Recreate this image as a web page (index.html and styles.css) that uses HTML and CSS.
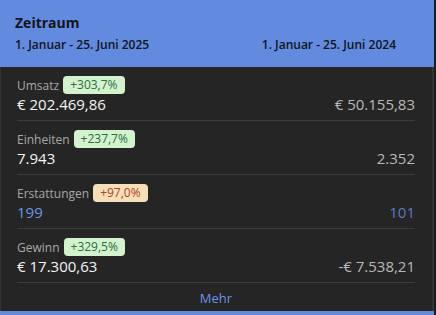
FILE: index.html
```html
<!DOCTYPE html>
<html lang="de">
<head>
<meta charset="utf-8">
<link rel="stylesheet" href="styles.css">
</head>
<body>
<div class="panel">
  <div class="header">
    <div class="title">Zeitraum</div>
    <div class="dates">
      <span>1. Januar - 25. Juni 2025</span>
      <span>1. Januar - 25. Juni 2024</span>
    </div>
  </div>
  <div class="body">
    <div class="row">
      <div class="label-line"><span class="label">Umsatz</span><span class="badge up">+303,7%</span></div>
      <div class="values"><span class="cur">€ 202.469,86</span><span class="prev">€ 50.155,83</span></div>
    </div>
    <div class="row">
      <div class="label-line"><span class="label">Einheiten</span><span class="badge up">+237,7%</span></div>
      <div class="values"><span class="cur">7.943</span><span class="prev">2.352</span></div>
    </div>
    <div class="row">
      <div class="label-line"><span class="label">Erstattungen</span><span class="badge warn">+97,0%</span></div>
      <div class="values"><span class="cur link">199</span><span class="prev link-dim">101</span></div>
    </div>
    <div class="row">
      <div class="label-line"><span class="label">Gewinn</span><span class="badge up">+329,5%</span></div>
      <div class="values"><span class="cur">€ 17.300,63</span><span class="prev">-€ 7.538,21</span></div>
    </div>
    <div class="more">Mehr</div>
  </div>
  <div class="bottom"></div>
</div>
</body>
</html>
```
FILE: styles.css
```css
* { box-sizing: border-box; }
html, body { margin: 0; padding: 0; }
body {
  width: 436px;
  height: 315px;
  overflow: hidden;
  background: #1c1c1c;
  font-family: "Open Sans", "Noto Sans", sans-serif;
}
.panel {
  width: 434px;
  display: flex;
  flex-direction: column;
}
.header {
  background: #628adf;
  color: #111418;
  padding: 14px 15px 0 15px;
  height: 67px;
}
.title {
  font-size: 14px;
  font-weight: 700;
  line-height: 18px;
}
.dates {
  display: flex;
  justify-content: space-between;
  padding-right: 23px;
  margin-top: 5px;
  font-size: 12px;
  font-weight: 600;
  line-height: 16px;
}
.body {
  background: #252525;
  border-left: 1px solid #333;
  border-right: 2px solid #333;
  padding: 0 17px 0 16px;
  height: 244px;
}
.row {
  padding: 9px 0 6px;
  border-bottom: 1px solid #3d3d3d;
}
.label-line {
  display: flex;
  align-items: center;
  gap: 4px;
  height: 18px;
}
.label {
  font-size: 12px;
  color: #a8a8a8;
}
.badge {
  font-size: 12px;
  line-height: 18px;
  padding: 0 7px;
  border-radius: 4px;
}
.badge.up { background: #d3f3cf; color: #2f6b3c; }
.badge.warn { background: #f8deb9; color: #a4481c; }
.values {
  display: flex;
  justify-content: space-between;
  align-items: baseline;
  height: 20px;
  line-height: 20px;
}
.cur {
  font-size: 15px;
  font-weight: 500;
  color: #f4f4f4;
}
.prev {
  font-size: 15px;
  color: #b8b8b8;
}
.cur.link { color: #6e96e6; }
.prev.link-dim { color: #5a7cc0; }
.more {
  text-align: center;
  color: #6a93e8;
  font-size: 13px;
  line-height: 18px;
  padding-top: 6px;
}
.bottom {
  height: 4px;
  background: #628adf;
}
```
